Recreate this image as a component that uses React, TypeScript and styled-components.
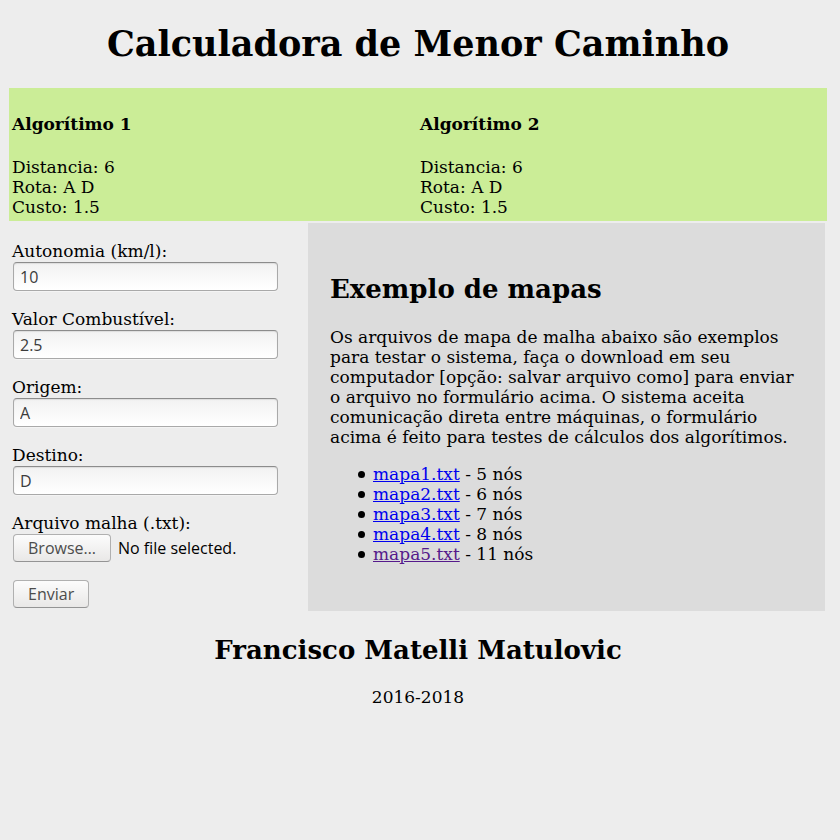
import React, { useRef, useState } from "react";
import styled, { createGlobalStyle } from "styled-components";

const GlobalStyle = createGlobalStyle`
  body {
    margin: 8px;
    background: #ededed;
    color: #000;
    font: 17px/20px "DejaVu Serif", serif;
  }
`;

const Page = styled.div`
  padding: 0 5px 0 1px;
`;

const Title = styled.h1`
  margin: 14px 0 22px;
  font-size: 35px;
  line-height: 44px;
  text-align: center;
`;

const Results = styled.section`
  display: grid;
  grid-template-columns: 1fr 1fr;
  column-gap: 2px;
  padding: 3px 1px 4px 3px;
  background: #cbed97;
`;

const Result = styled.article`
  min-width: 0;
`;

const ResultTitle = styled.h4`
  margin: 23px 0;
  font-size: 17px;
  line-height: 20px;
`;

const Line = styled.div``;

const Columns = styled.div`
  display: grid;
  grid-template-columns: 297px 1fr;
  gap: 2px;
  margin: 2px 2px 0 0;
`;

const Form = styled.form`
  padding: 18px 3px 3px;
`;

const Field = styled.div`
  margin-bottom: 18px;

  label {
    display: block;
    margin-bottom: 1px;
  }
`;

const TextInput = styled.input`
  display: block;
  box-sizing: border-box;
  width: 265px;
  max-width: 100%;
  height: 29px;
  margin: 0 0 0 1px;
  padding: 0 6px;
  border: 1px solid #a9a9a9;
  border-top-color: #8c8c8c;
  border-radius: 4px;
  background: linear-gradient(#f2f2f2, #ffffff);
  box-shadow: inset 0 1px 1px #dddddd, 0 1px 0 #f4f4f4;
  color: #3c3c3c;
  font: 16px "Open Sans", sans-serif;
`;

const Button = styled.button`
  display: block;
  height: 28px;
  margin: 0 0 0 1px;
  padding: 0 14px;
  border: 1px solid #b0b0b0;
  border-bottom-color: #949494;
  border-radius: 4px;
  background: linear-gradient(#fcfcfc, #e9e8e7);
  color: #4c4c4c;
  font: 16px "Open Sans", sans-serif;
`;

const FileRow = styled.div`
  display: flex;
  align-items: center;
  gap: 7px;
  font: 16px "Open Sans", sans-serif;
`;

const Examples = styled.section`
  padding: 50px 22px 30px;
  background: #dcdcdc;
`;

const Heading = styled.h2`
  margin: 0;
  font-size: 26px;
  line-height: 32px;
`;

const Text = styled.p`
  margin: 22px 0 17px;
`;

const Maps = styled.ul`
  margin: 0;
  padding-left: 28px;
  list-style: none;
`;

const MapItem = styled.li`
  &::before {
    content: "";
    display: inline-block;
    width: 7px;
    height: 7px;
    margin-right: 8px;
    border-radius: 50%;
    background: #000;
    vertical-align: 2px;
  }
`;

const MapLink = styled.a<{ $visited?: boolean }>`
  color: ${(p) => (p.$visited ? "#551a8b" : "#0000ee")};
`;

const Footer = styled.footer`
  padding-top: 23px;
  text-align: center;

  p {
    margin: 21px 0;
  }
`;

const results = [
  { title: "Algorítimo 1", distance: 6, route: "A D", cost: 1.5 },
  { title: "Algorítimo 2", distance: 6, route: "A D", cost: 1.5 },
];

const fields = [
  { id: "autonomia", label: "Autonomia (km/l):", value: "10" },
  { id: "valor", label: "Valor Combustível:", value: "2.5" },
  { id: "origem", label: "Origem:", value: "A" },
  { id: "destino", label: "Destino:", value: "D" },
];

const maps = [
  { file: "mapa1.txt", nodes: 5 },
  { file: "mapa2.txt", nodes: 6 },
  { file: "mapa3.txt", nodes: 7 },
  { file: "mapa4.txt", nodes: 8 },
  { file: "mapa5.txt", nodes: 11, visited: true },
];

export default function App() {
  const picker = useRef<HTMLInputElement>(null);
  const [fileName, setFileName] = useState("No file selected.");

  return (
    <Page>
      <GlobalStyle />
      <Title>Calculadora de Menor Caminho</Title>
      <Results>
        {results.map((r) => (
          <Result key={r.title}>
            <ResultTitle>{r.title}</ResultTitle>
            <Line>Distancia: {r.distance}</Line>
            <Line>Rota: {r.route}</Line>
            <Line>Custo: {r.cost}</Line>
          </Result>
        ))}
      </Results>
      <Columns>
        <Form onSubmit={(e) => e.preventDefault()}>
          {fields.map((f) => (
            <Field key={f.id}>
              <label htmlFor={f.id}>{f.label}</label>
              <TextInput id={f.id} name={f.id} defaultValue={f.value} />
            </Field>
          ))}
          <Field>
            <label htmlFor="malha">Arquivo malha (.txt):</label>
            <FileRow>
              <input
                ref={picker}
                id="malha"
                type="file"
                accept=".txt"
                hidden
                onChange={(e) => setFileName(e.target.files?.[0]?.name ?? "No file selected.")}
              />
              <Button type="button" onClick={() => picker.current?.click()}>
                Browse…
              </Button>
              <span>{fileName}</span>
            </FileRow>
          </Field>
          <Button type="submit">Enviar</Button>
        </Form>
        <Examples>
          <Heading>Exemplo de mapas</Heading>
          <Text>
            Os arquivos de mapa de malha abaixo são exemplos para testar o sistema, faça o download
            em seu computador [opção: salvar arquivo como] para enviar o arquivo no formulário
            acima. O sistema aceita comunicação direta entre máquinas, o formulário acima é feito
            para testes de cálculos dos algorítimos.
          </Text>
          <Maps>
            {maps.map((m) => (
              <MapItem key={m.file}>
                <MapLink href={`#${m.file}`} $visited={m.visited}>
                  {m.file}
                </MapLink>{" "}
                - {m.nodes} nós
              </MapItem>
            ))}
          </Maps>
        </Examples>
      </Columns>
      <Footer>
        <Heading>Francisco Matelli Matulovic</Heading>
        <p>2016-2018</p>
      </Footer>
    </Page>
  );
}
